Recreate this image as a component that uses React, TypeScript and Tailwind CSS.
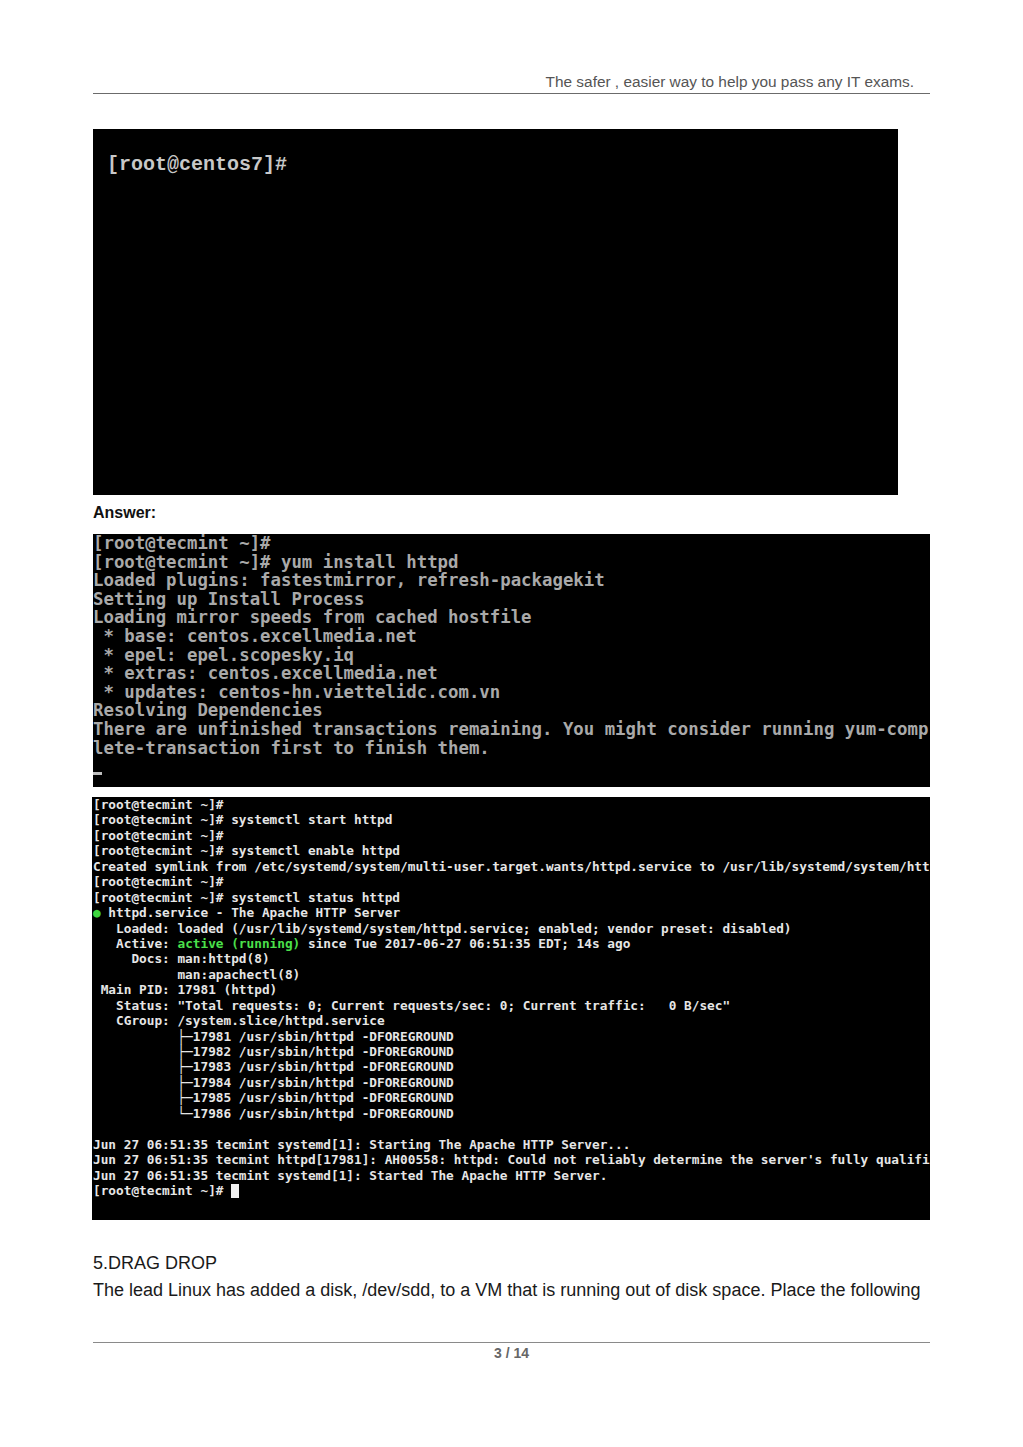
import React from "react";

const t2Lines = [
  "[root@tecmint ~]#",
  "[root@tecmint ~]# yum install httpd",
  "Loaded plugins: fastestmirror, refresh-packagekit",
  "Setting up Install Process",
  "Loading mirror speeds from cached hostfile",
  " * base: centos.excellmedia.net",
  " * epel: epel.scopesky.iq",
  " * extras: centos.excellmedia.net",
  " * updates: centos-hn.viettelidc.com.vn",
  "Resolving Dependencies",
  "There are unfinished transactions remaining. You might consider running yum-comp",
  "lete-transaction first to finish them.",
];

const t3Before = [
  "[root@tecmint ~]#",
  "[root@tecmint ~]# systemctl start httpd",
  "[root@tecmint ~]#",
  "[root@tecmint ~]# systemctl enable httpd",
  "Created symlink from /etc/systemd/system/multi-user.target.wants/httpd.service to /usr/lib/systemd/system/htt",
  "[root@tecmint ~]#",
  "[root@tecmint ~]# systemctl status httpd",
];

const t3After = [
  "   Loaded: loaded (/usr/lib/systemd/system/httpd.service; enabled; vendor preset: disabled)",
];

const t3Rest = [
  "     Docs: man:httpd(8)",
  "           man:apachectl(8)",
  " Main PID: 17981 (httpd)",
  '   Status: "Total requests: 0; Current requests/sec: 0; Current traffic:   0 B/sec"',
  "   CGroup: /system.slice/httpd.service",
  "           ├─17981 /usr/sbin/httpd -DFOREGROUND",
  "           ├─17982 /usr/sbin/httpd -DFOREGROUND",
  "           ├─17983 /usr/sbin/httpd -DFOREGROUND",
  "           ├─17984 /usr/sbin/httpd -DFOREGROUND",
  "           ├─17985 /usr/sbin/httpd -DFOREGROUND",
  "           └─17986 /usr/sbin/httpd -DFOREGROUND",
  "",
  "Jun 27 06:51:35 tecmint systemd[1]: Starting The Apache HTTP Server...",
  "Jun 27 06:51:35 tecmint httpd[17981]: AH00558: httpd: Could not reliably determine the server's fully qualifi",
  "Jun 27 06:51:35 tecmint systemd[1]: Started The Apache HTTP Server.",
];

export default function App() {
  return (
    <div className="w-[1023px] min-h-[1447px] bg-white">
      <div className="ml-[93px] w-[837px] pt-[73px]">
        {/* header */}
        <div
          className="border-b border-[#6b6b6b] pb-[2px] pr-[16px] text-right text-[15.4px] leading-[18px] text-[#555555]"
          style={{ fontFamily: '"Liberation Sans", Arial, sans-serif' }}
        >
          The safer , easier way to help you pass any IT exams.
        </div>

        {/* terminal 1 */}
        <div className="mt-[35px] h-[366px] w-[805px] bg-black pl-[14px] pt-[24px]">
          <div
            className="whitespace-pre text-[20px] font-bold leading-[24px] text-[#c8c8c8]"
            style={{ fontFamily: '"Liberation Mono", "Courier New", monospace' }}
          >
            [root@centos7]#
          </div>
        </div>

        <div
          className="mt-[8px] text-[16px] font-bold leading-[20px] text-[#111111]"
          style={{ fontFamily: '"Liberation Sans", Arial, sans-serif' }}
        >
          Answer:
        </div>

        {/* terminal 2 */}
        <div className="mt-[11px] h-[253px] w-[837px] overflow-hidden bg-black">
          <div
            className="whitespace-pre text-[17.35px] font-bold leading-[18.6px] text-[#a9a9a9]"
            style={{ fontFamily: '"DejaVu Sans Mono", monospace' }}
          >
            {t2Lines.map((l, i) => (
              <div key={i}>{l}</div>
            ))}
            <div className="flex h-[18.6px] items-end pb-[1px]">
              <span className="inline-block h-[3px] w-[9px] bg-[#bdbdbd]" />
            </div>
          </div>
        </div>

        {/* terminal 3 */}
        <div className="-ml-[1px] mt-[10px] h-[423px] w-[838px] overflow-hidden bg-black pl-[1px]">
          <div
            className="whitespace-pre text-[12.75px] font-bold leading-[15.44px] text-[#e6e6e6]"
            style={{ fontFamily: '"DejaVu Sans Mono", monospace' }}
          >
            {t3Before.map((l, i) => (
              <div key={"a" + i}>{l}</div>
            ))}
            <div>
              <span className="text-[#3fd63f]">●</span> httpd.service - The Apache HTTP Server
            </div>
            {t3After.map((l, i) => (
              <div key={"b" + i}>{l}</div>
            ))}
            <div>
              {"   Active: "}
              <span className="text-[#4be04b]">active (running)</span>
              {" since Tue 2017-06-27 06:51:35 EDT; 14s ago"}
            </div>
            {t3Rest.map((l, i) => (
              <div key={"c" + i}>{l === "" ? "\u00a0" : l}</div>
            ))}
            <div className="flex items-center">
              <span>{"[root@tecmint ~]# "}</span>
              <span className="inline-block h-[14px] w-[7.7px] bg-[#f0f0f0]" />
            </div>
          </div>
        </div>

        {/* question */}
        <div
          className="mt-[29.5px] text-[18px] leading-[27px] text-[#1a1a1a]"
          style={{ fontFamily: '"Liberation Sans", Arial, sans-serif' }}
        >
          <div>5.DRAG DROP</div>
          <div className="whitespace-nowrap">
            The lead Linux has added a disk, /dev/sdd, to a VM that is running out of disk space. Place the following
          </div>
        </div>

        {/* footer */}
        <div className="mt-[38.5px] border-t border-[#8a8a8a] pt-[2px]">
          <div
            className="text-center text-[14px] font-bold leading-[16px] text-[#666666]"
            style={{ fontFamily: '"Liberation Sans", Arial, sans-serif' }}
          >
            3 / 14
          </div>
        </div>
      </div>
    </div>
  );
}
